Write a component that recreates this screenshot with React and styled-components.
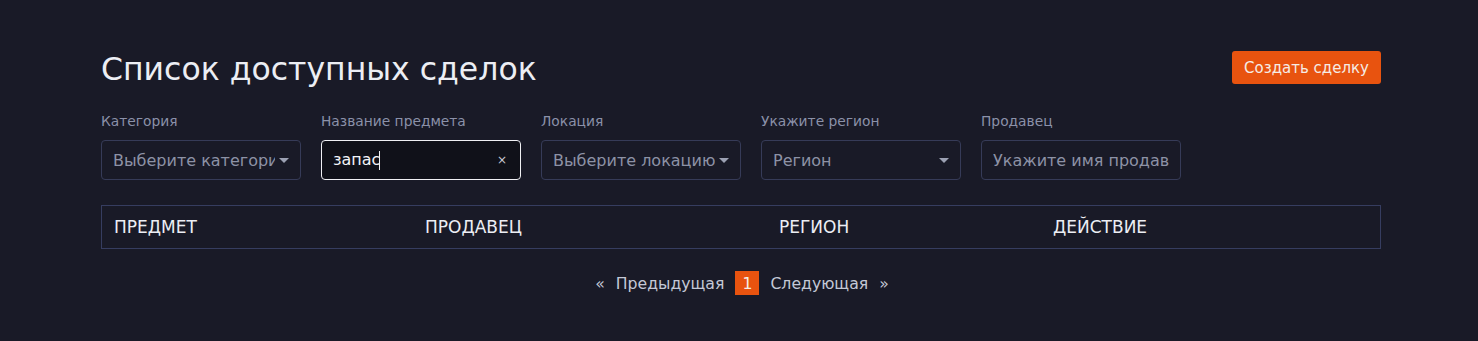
import React from "react";
import styled, { createGlobalStyle } from "styled-components";

const Global = createGlobalStyle`
  html, body { margin: 0; padding: 0; background: #191a27; }
  body { font-family: "DejaVu Sans", "Noto Sans", sans-serif; color: #e6e8ef; }
  * { box-sizing: border-box; }
`;

const Page = styled.div`
  width: 1280px;
  margin-left: 101px;
  padding-top: 47px;
`;

const Head = styled.div`
  display: flex;
  justify-content: space-between;
  align-items: center;
`;

const Title = styled.h1`
  margin: 0;
  font-size: 31.5px;
  font-weight: 400;
  color: #eceef4;
  line-height: 44px;
`;

const PrimaryButton = styled.button`
  height: 33px;
  padding: 0 12px;
  background: #e8530f;
  border: none;
  border-radius: 3px;
  color: #f5ece6;
  font-family: inherit;
  font-size: 15px;
  margin-top: -3px;
`;

const Filters = styled.div`
  display: grid;
  grid-template-columns: repeat(5, 200px);
  gap: 20px;
  margin-top: 21px;
`;

const Field = styled.label`
  display: flex;
  flex-direction: column;
  gap: 10px;
`;

const Label = styled.span`
  font-size: 13.8px;
  color: #8b91a9;
  line-height: 18px;
`;

const Box = styled.div`
  height: 40px;
  border: 1px solid ${(p) => (p.$active ? "#f0f0f4" : "#363b58")};
  background: ${(p) => (p.$active ? "#101119" : "transparent")};
  border-radius: 4px;
  display: flex;
  align-items: center;
  padding: 0 ${(p) => (p.$plain ? "10px" : "11px")} 0 11px;
  font-size: 16px;
  color: ${(p) => (p.$active ? "#f2f3f7" : "#8d92a6")};
  white-space: nowrap;
`;

const BoxText = styled.span`
  flex: 1;
  min-width: 0;
  overflow: hidden;
`;

const Caret = styled.span`
  width: 0;
  height: 0;
  border-left: 5px solid transparent;
  border-right: 5px solid transparent;
  border-top: 5px solid #9ca1b3;
  margin-left: 4px;
  flex: none;
`;

const Clear = styled.span`
  font-size: 12px;
  color: #c7c9d2;
  margin-right: 2px;
`;

const Cursor = styled.span`
  display: inline-block;
  width: 1px;
  height: 19px;
  background: #f2f3f7;
  vertical-align: middle;
  margin-left: -1px;
`;

const Table = styled.div`
  margin-top: 25px;
  height: 44px;
  border: 1px solid #363d60;
  display: grid;
  grid-template-columns: 311px 354px 274px 1fr;
  align-items: center;
`;

const Th = styled.div`
  padding-left: 12px;
  font-size: 17px;
  color: #eceef4;
  text-transform: uppercase;
`;

const Pager = styled.div`
  display: flex;
  justify-content: center;
  align-items: center;
  gap: 11px;
  margin-top: 22px;
  font-size: 15.7px;
  color: #c4c8d6;
  margin-left: 2px;
`;

const PageBtn = styled.span`
  display: inline-flex;
  align-items: center;
  justify-content: center;
  width: 24px;
  height: 24px;
  background: ${(p) => (p.$active ? "#e8530f" : "transparent")};
  color: #f4ede8;
`;

export default function App() {
  return (
    <>
      <Global />
      <Page>
        <Head>
          <Title>Список доступных сделок</Title>
          <PrimaryButton>Создать сделку</PrimaryButton>
        </Head>
        <Filters>
          <Field>
            <Label>Категория</Label>
            <Box>
              <BoxText>Выберите категорию</BoxText>
              <Caret />
            </Box>
          </Field>
          <Field>
            <Label>Название предмета</Label>
            <Box $active>
              <BoxText>
                запас<Cursor />
              </BoxText>
              <Clear>×</Clear>
            </Box>
          </Field>
          <Field>
            <Label>Локация</Label>
            <Box>
              <BoxText>Выберите локацию</BoxText>
              <Caret />
            </Box>
          </Field>
          <Field>
            <Label>Укажите регион</Label>
            <Box>
              <BoxText>Регион</BoxText>
              <Caret />
            </Box>
          </Field>
          <Field>
            <Label>Продавец</Label>
            <Box $plain>
              <BoxText>Укажите имя продавца</BoxText>
            </Box>
          </Field>
        </Filters>
        <Table>
          <Th>Предмет</Th>
          <Th>Продавец</Th>
          <Th>Регион</Th>
          <Th>Действие</Th>
        </Table>
        <Pager>
          <span>«</span>
          <span>Предыдущая</span>
          <PageBtn $active>1</PageBtn>
          <span>Следующая</span>
          <span>»</span>
        </Pager>
      </Page>
    </>
  );
}
